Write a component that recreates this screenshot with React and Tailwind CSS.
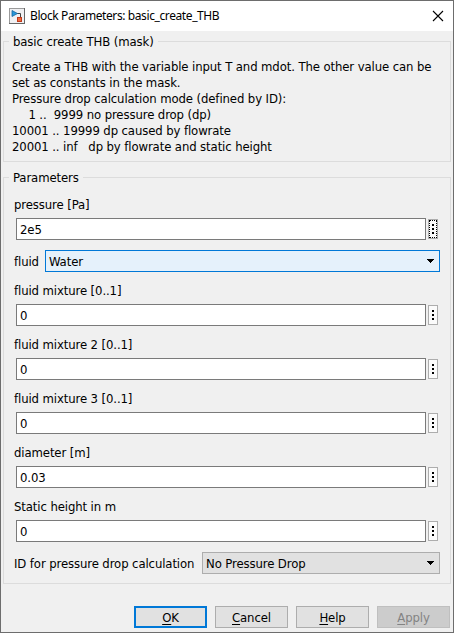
import React from "react";

function Group({ title, className, children }) {
  return (
    <section className={`mx-[2px] border border-[#dcdcdc] ${className}`}>
      <div className="-mt-2 flex h-4">
        <span className="ml-[5px] bg-[#f0f0f0] px-1 leading-4 whitespace-pre">{title}</span>
      </div>
      {children}
    </section>
  );
}

function Dots({ focused }) {
  return (
    <button className="ml-[2px] flex h-5 w-[10px] items-center justify-center border border-[#adadad] bg-[#fbfbfb]">
      <span className={`flex h-[18px] w-2 shrink-0 flex-col items-center justify-center gap-[2px] ${focused ? "border border-dotted border-black" : ""}`}>
        <i className="size-[2px] shrink-0 bg-black" />
        <i className="size-[2px] shrink-0 bg-black" />
        <i className="size-[2px] shrink-0 bg-black" />
      </span>
    </button>
  );
}

function Field({ label, value, focused }) {
  return (
    <div className="h-[54px]">
      <div className="ml-[10px] h-[22px] pt-px leading-4 whitespace-pre">{label}</div>
      <div className="ml-3 flex h-[22px] items-center">
        <div className="flex h-[22px] w-[410px] items-center border border-[#7a7a7a] bg-white pt-[2px] pl-[3px]">{value}</div>
        <Dots focused={focused} />
      </div>
    </div>
  );
}

function Combo({ className, children }) {
  return (
    <div className={`flex h-[22px] items-center justify-between border pr-[5px] pl-[3px] whitespace-pre ${className}`}>
      <span className="pt-[2px]">{children}</span>
      <svg width="7" height="4" viewBox="0 0 7 4" shapeRendering="crispEdges">
        <path d="M0 0h7v1H6v1H5v1H4v1H3V3H2V2H1V1H0z" fill="#000" />
      </svg>
    </div>
  );
}

function Button({ hot, rest, className }) {
  return (
    <button className={`flex h-[22px] w-[73px] items-center justify-center pt-[2px] leading-4 ${className}`}>
      <span><span className="underline decoration-1 underline-offset-2 [text-decoration-skip-ink:none]">{hot}</span>{rest}</span>
    </button>
  );
}

export default function App() {
  return (
    <div className="flex h-[633px] w-[454px] flex-col border border-[#6d6d6d] bg-[#f0f0f0] font-['DejaVu_Sans_Condensed','DejaVu_Sans',sans-serif] text-[13px] leading-4 tracking-[-0.11px] text-black [font-stretch:condensed]">
      <header className="flex h-[30px] items-center bg-white pl-2">
        <svg width="16" height="16" viewBox="0 0 16 16">
          <rect x=".5" y=".5" width="15" height="15" fill="#f0f0f2" stroke="#9a9a9a" />
          <path d="M0 15.5h16M15.5 0v16" stroke="#666" />
          <path d="M8 5.5h3.5V10" fill="none" stroke="#444" />
          <path d="M3 2.5 8.5 5.5 3 8.5z" fill="#2998da" stroke="#17659c" strokeWidth=".8" />
          <rect x="8.5" y="9.5" width="4" height="4" fill="#f36b3b" stroke="#c0391a" />
        </svg>
        <h1 className="ml-[5px] font-['Noto_Sans',sans-serif] text-[12px] tracking-[-0.4px] whitespace-pre [font-stretch:normal]">Block Parameters: basic_create_THB</h1>
        <svg className="mr-[9px] ml-auto" width="12" height="12" viewBox="0 0 12 12">
          <path d="m1 1 10 10M11 1 1 11" stroke="#000" strokeWidth="1.1" />
        </svg>
      </header>

      <Group title="basic create THB (mask)" className="mt-[10px] h-[121px]">
        <div className="mt-[9px] ml-2 whitespace-pre">
          <p>Create a THB with the variable input T and mdot. The other value can be</p>
          <p>set as constants in the mask.</p>
          <p>Pressure drop calculation mode (defined by ID):</p>
          <p className="pl-[2px]">{"    1 ..  9999 no pressure drop (dp)"}</p>
          <p>10001 .. 19999 dp caused by flowrate</p>
          <p>{"20001 .. inf   dp by flowrate and static height"}</p>
        </div>
      </Group>

      <Group title="Parameters" className="mt-[15px] h-[407px]">
        <div className="mt-[10px]">
          <Field label="pressure [Pa]" value="2e5" focused />
          <div className="ml-[10px] flex h-[22px] items-center">
            <span className="w-[31px] pt-[2px]">fluid</span>
            <Combo className="w-[395px] border-[#0078d7] bg-[#e5f1fb]">Water</Combo>
          </div>
          <div className="mt-[10px]">
            <Field label="fluid mixture [0..1]" value="0" />
            <Field label="fluid mixture 2 [0..1]" value="0" />
            <Field label="fluid mixture 3 [0..1]" value="0" />
            <Field label="diameter [m]" value="0.03" />
            <Field label="Static height in m" value="0" />
          </div>
          <div className="ml-[10px] flex h-[22px] items-center">
            <span className="w-[188px] pt-[2px] whitespace-pre">ID for pressure drop calculation</span>
            <Combo className="w-[238px] border-[#adadad] bg-[#e1e1e1]">No Pressure Drop</Combo>
          </div>
        </div>
      </Group>

      <footer className="mt-[22px] flex justify-end gap-2 pr-[3px]">
        <Button hot="O" rest="K" className="border-2 border-[#0078d7] bg-[#e1e1e1]" />
        <Button hot="C" rest="ancel" className="border border-[#adadad] bg-[#e1e1e1]" />
        <Button hot="H" rest="elp" className="border border-[#adadad] bg-[#e1e1e1]" />
        <Button hot="A" rest="pply" className="border border-[#bfbfbf] bg-[#cccccc] text-[#838383]" />
      </footer>
    </div>
  );
}
